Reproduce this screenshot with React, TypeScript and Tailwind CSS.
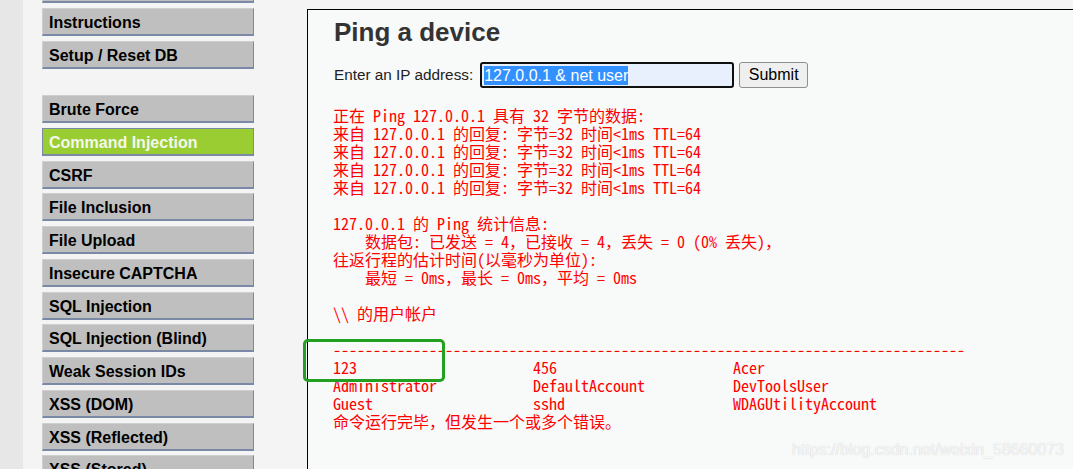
import React from "react";

const group1 = ["", "Instructions", "Setup / Reset DB"];
const group2 = [
  "Brute Force",
  "Command Injection",
  "CSRF",
  "File Inclusion",
  "File Upload",
  "Insecure CAPTCHA",
  "SQL Injection",
  "SQL Injection (Blind)",
  "Weak Session IDs",
  "XSS (DOM)",
  "XSS (Reflected)",
  "XSS (Stored)",
];

function MenuItem({ label }: { label: string }) {
  const active = label === "Command Injection";
  return (
    <div
      className={
        active
          ? "h-[28px] shrink-0 border border-b-2 border-[#7a89a6] bg-[#9acd32] pl-[6px] pt-[4px] text-[16px] font-bold leading-[20px] text-[#f4f8ec]"
          : "h-[28px] shrink-0 border-l border-t border-r border-b-2 border-l-[#cfcfcf] border-t-[#cfcfcf] border-r-[#7a89a6] border-b-[#7a89a6] bg-[#bfbfbf] pl-[6px] pt-[4px] text-[16px] font-bold leading-[20px] text-black"
      }
      style={{ fontFamily: '"Liberation Sans", Arial, sans-serif' }}
    >
      {label}
    </div>
  );
}

const dash = "-".repeat(79);
const pad = (s: string) => s.padEnd(25, " ");
const reply = "来自 127.0.0.1 的回复: 字节=32 时间<1ms TTL=64";
const lines = [
  "正在 Ping 127.0.0.1 具有 32 字节的数据:",
  reply,
  reply,
  reply,
  reply,
  "",
  "127.0.0.1 的 Ping 统计信息:",
  "    数据包: 已发送 = 4，已接收 = 4，丢失 = 0 (0% 丢失)，",
  "往返行程的估计时间(以毫秒为单位):",
  "    最短 = 0ms，最长 = 0ms，平均 = 0ms",
  "",
  "\\\\ 的用户帐户",
  "",
  dash,
  pad("123") + pad("456") + "Acer",
  pad("Administrator") + pad("DefaultAccount") + "DevToolsUser",
  pad("Guest") + pad("sshd") + "WDAGUtilityAccount",
  "命令运行完毕，但发生一个或多个错误。",
];

export default function App() {
  return (
    <div
      className="relative flex h-[469px] w-[1073px] overflow-hidden bg-[#f4f4f4]"
      style={{ fontFamily: '"Liberation Sans", Arial, sans-serif' }}
    >
      <div className="h-full w-[23px] shrink-0 bg-[#e7e7e7]" />
      <div className="ml-[19px] mt-[-25px] flex w-[212px] shrink-0 flex-col">
        <div className="flex flex-col gap-[5px]">
          {group1.map((l, i) => (
            <MenuItem key={i} label={l} />
          ))}
        </div>
        <div className="mt-[26px] flex flex-col gap-[4.75px]">
          {group2.map((l) => (
            <MenuItem key={l} label={l} />
          ))}
        </div>
      </div>
      <div className="ml-[53px] mt-[9px] flex-1 border-l border-t border-black bg-[#f8f9f9] pl-[25px]">
        <h1 className="ml-px mt-[7px] text-[26px] font-bold leading-[30px] text-[#333333]">
          Ping a device
        </h1>
        <div className="mt-[15px] flex items-center">
          <span className="ml-px text-[15.3px] leading-[18px] text-[#222]">Enter an IP address:</span>
          <div className="ml-[7px] flex h-[26px] w-[254px] items-center rounded-[3px] border-2 border-[#101010] bg-[#e8f0fe] pl-[2px]">
            <span className="bg-[#3390ff] text-[16px] leading-[19px] text-white">127.0.0.1 &amp; net user</span>
          </div>
          <div className="ml-[5px] flex h-[26px] w-[69px] items-center justify-center rounded-[3px] border border-[#8f8f8f] bg-[#efefef] text-[16px] text-black">
            Submit
          </div>
        </div>
        <pre
          className="mt-[18px] whitespace-pre text-[16px] leading-[18px] text-[#ff0000]"
          style={{
            fontFamily:
              '"Noto Sans Mono CJK SC", "Liberation Mono", "Noto Sans CJK SC", monospace',
          }}
        >
          {lines.join("\n")}
        </pre>
      </div>
      <div className="absolute left-[303px] top-[339px] h-[43px] w-[142px] rounded-[5px] border-[3px] border-[#22a022]" />
      <div className="absolute left-[792px] top-[440px] text-[16px] leading-[20px] text-[#f7f7f7] [text-shadow:0_0_1px_#c4c4c4]">
        https://blog.csdn.net/weixin_58660073
      </div>
    </div>
  );
}
